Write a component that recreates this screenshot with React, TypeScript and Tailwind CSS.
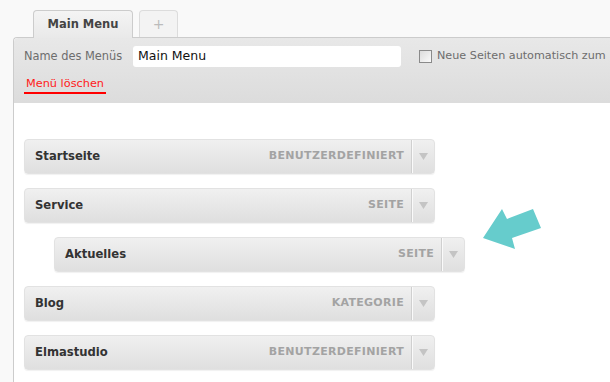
import React from "react";

type MenuItem = {
  title: string;
  type: string;
  depth: number;
};

const items: MenuItem[] = [
  { title: "Startseite", type: "Benutzerdefiniert", depth: 0 },
  { title: "Service", type: "Seite", depth: 0 },
  { title: "Aktuelles", type: "Seite", depth: 1 },
  { title: "Blog", type: "Kategorie", depth: 0 },
  { title: "Elmastudio", type: "Benutzerdefiniert", depth: 0 },
];

function MenuRow({ item }: { item: MenuItem }) {
  return (
    <div className={item.depth === 1 ? "pl-[30px]" : ""}>
      <div className="flex h-[35px] w-[411px] items-center rounded-[4px] border border-[#e2e2e2] bg-gradient-to-b from-[#f0f0f0] to-[#dfdfdf] shadow-[0_1px_1px_rgba(0,0,0,0.06)]">
        <span className="flex-1 pl-[10px] text-[11.6px] font-bold text-[#333]">{item.title}</span>
        <span className="pr-[7px] text-[11px] font-bold uppercase tracking-[0.3px] text-[#a3a3a3]">
          {item.type}
        </span>
        <div className="flex h-full w-[23px] items-center justify-center border-l border-l-[#d0d0d0] shadow-[inset_1px_0_0_#fafafa]">
          <svg width="9" height="7" viewBox="0 0 9 7">
            <polygon points="0,0 9,0 4.5,7" fill="#c4c4c4" />
          </svg>
        </div>
      </div>
    </div>
  );
}

export default function App() {
  return (
    <div
      className="relative h-[382px] w-[610px] overflow-hidden bg-[#f9f9f9] pl-[13px] pt-[10px]"
      style={{ fontFamily: '"DejaVu Sans", Verdana, sans-serif' }}
    >
      {/* tabs */}
      <div className="flex gap-[6px] pl-[20px]">
        <div className="relative z-10 -mb-px flex h-[28px] w-[100px] items-center justify-center rounded-t-[4px] border border-b-0 border-[#cccccc] bg-gradient-to-b from-[#f4f4f4] to-[#e9e9e9] text-[11.5px] font-bold text-[#444]">
          Main Menu
        </div>
        <div className="flex h-[27px] w-[39px] items-center justify-center rounded-t-[4px] border border-b-0 border-[#dcdcdc] bg-[#f3f3f3] text-[14px] text-[#bbb]">
          +
        </div>
      </div>

      {/* panel */}
      <div className="rounded-tl-[4px] border-l border-t border-[#cccccc] bg-white">
        <div className="h-[65px] rounded-tl-[4px] bg-gradient-to-b from-[#e8e8e8] to-[#dcdcdc] pl-[10px] pt-[8px]">
          <div className="flex items-center whitespace-nowrap">
            <span className="w-[109px] shrink-0 text-[11.4px] text-[#6d6d6d]">Name des Menüs</span>
            <div className="flex h-[21px] w-[268px] shrink-0 items-center rounded-[3px] bg-white pl-[5px] text-[12.5px] text-[#111]">
              Main Menu
            </div>
            <div className="ml-[18px] h-[13px] w-[13px] shrink-0 border border-[#8a8a8a] bg-gradient-to-br from-[#dcdcdc] to-[#fafafa]" />
            <span className="ml-[5px] shrink-0 text-[11.2px] text-[#6d6d6d]">Neue Seiten automatisch zum</span>
          </div>
          <div className="mt-[9px] flex">
            <span className="border-b-2 border-[#ff0000] px-[2px] pb-[1px] text-[11.3px] leading-[15px] text-[#ff1a1a]">
              Menü löschen
            </span>
          </div>
        </div>

        <div className="flex h-[300px] flex-col gap-[14px] pl-[10px] pt-[36px]">
          {items.map((item) => (
            <MenuRow key={item.title} item={item} />
          ))}
        </div>
      </div>

      {/* arrow */}
      <svg className="absolute left-[470px] top-[195px]" width="80" height="65" viewBox="0 0 80 65">
        <polygon points="13,43 32,14 37,24 63,14 71,33 42,43 45,54" fill="#66cccc" />
      </svg>
    </div>
  );
}
